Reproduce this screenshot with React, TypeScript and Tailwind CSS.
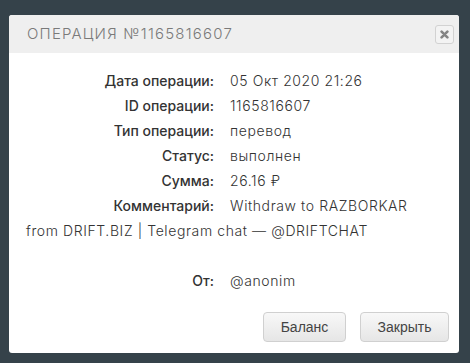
import React from "react";

const rows: [string, React.ReactNode][] = [
  ["Дата операции:", "05 Окт 2020 21:26"],
  ["ID операции:", "1165816607"],
  ["Тип операции:", "перевод"],
  ["Статус:", "выполнен"],
  ["Сумма:", "26.16 ₽"],
];

export default function App() {
  return (
    <div className="w-[470px] h-[363px] bg-[#35424a] pt-[15px] pl-[9px] overflow-hidden" style={{ fontFamily: "Inter, sans-serif" }}>
      <div className="w-[450px] h-[338px] bg-white rounded-[3px] flex flex-col overflow-hidden">
        <div className="h-[38px] bg-[#efefef] flex items-center justify-between pl-[18px] pr-[5px] shrink-0">
          <div className="text-[15px] tracking-[1.2px] text-[#7a7a7a] font-light uppercase">Операция №1165816607</div>
          <div className="w-[19px] h-[19px] border border-[#d2d2d2] rounded-[3px] flex items-center justify-center bg-[#f3f3f3]">
            <svg width="9" height="9" viewBox="0 0 9 9">
              <path d="M1.6 1.6 L7.4 7.4 M7.4 1.6 L1.6 7.4" stroke="#858585" strokeWidth="2.6" strokeLinecap="round" />
            </svg>
          </div>
        </div>
        <div className="flex-1 px-[17px] pt-[15px] text-[14px] leading-[25px] text-[#333]">
          {rows.map(([l, v]) => (
            <div key={l}>
              <span className="inline-block w-[188px] text-right font-medium">{l}</span>
              <span className="ml-[16px] font-light tracking-[0.6px]">{v}</span>
            </div>
          ))}
          <div>
            <span className="inline-block w-[188px] text-right font-medium">Комментарий:</span>
            <span className="ml-[16px] font-light tracking-[0.6px]">Withdraw to RAZBORKAR from DRIFT.BIZ | Telegram chat — @DRIFTCHAT</span>
          </div>
          <div className="h-[25px]" />
          <div>
            <span className="inline-block w-[188px] text-right font-medium">От:</span>
            <span className="ml-[16px] font-light tracking-[0.6px]">@anonim</span>
          </div>
        </div>
        <div className="flex justify-end gap-[14px] pr-[10px] pb-[11px]" style={{ fontFamily: "'Liberation Sans', Arial, sans-serif" }}>
          <button className="w-[83px] h-[30px] rounded-[4px] border border-[#d0d0d0] bg-gradient-to-b from-[#f8f8f8] to-[#e6e6e6] text-[14px] text-[#444]">Баланс</button>
          <button className="w-[89px] h-[30px] rounded-[4px] border border-[#d0d0d0] bg-gradient-to-b from-[#f8f8f8] to-[#e6e6e6] text-[14px] text-[#444]">Закрыть</button>
        </div>
      </div>
    </div>
  );
}
